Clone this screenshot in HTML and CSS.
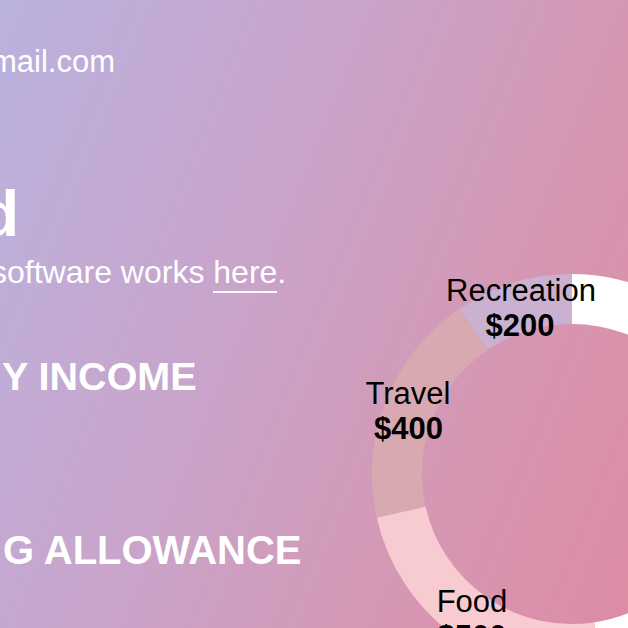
FILE: index.html
```html
<!DOCTYPE html>
<html lang="en">
<head>
<meta charset="utf-8">
<title>Budget</title>
<link rel="stylesheet" href="styles.css">
</head>
<body>
<div class="page">
  <section class="intro">
    <p class="email">mail.com</p>
    <h1 class="title">d</h1>
    <p class="subtitle">software works <a class="link" href="#">here</a>.</p>
    <h2 class="stat stat-income">Y INCOME</h2>
    <h2 class="stat stat-allowance">G ALLOWANCE</h2>
  </section>
  <section class="chart">
    <svg class="donut" width="288" height="378" viewBox="340 250 288 378" xmlns="http://www.w3.org/2000/svg">
      <path class="seg seg-rest" d="M597.9 647.1 A175 175 0 0 0 572 299"/>
      <path class="seg seg-rec" d="M572 299 A175 175 0 0 0 473.6 329.3"/>
      <path class="seg seg-travel" d="M473.6 329.3 A175 175 0 0 0 401.2 512.2"/>
      <path class="seg seg-food" d="M401.2 512.2 A175 175 0 0 0 597.9 647.1"/>
      <text class="lbl" x="521" y="301">Recreation</text>
      <text class="val" x="520" y="336">$200</text>
      <text class="lbl" x="408" y="404">Travel</text>
      <text class="val" x="408.5" y="439">$400</text>
      <text class="lbl" x="472" y="612">Food</text>
      <text class="val" x="472" y="647">$500</text>
    </svg>
  </section>
</div>
</body>
</html>
```

FILE: styles.css
```css
html, body {
  margin: 0;
  padding: 0;
}
body {
  width: 628px;
  height: 628px;
  overflow: hidden;
  background: linear-gradient(112deg, #bab2de 0%, #c9a4ca 40%, #d597b3 72%, #de8ca4 100%);
  font-family: "Liberation Sans", Arial, sans-serif;
  color: #ffffff;
}
.page {
  display: grid;
  grid-template-columns: 340px 288px;
  height: 628px;
}
.intro {
  display: flex;
  flex-direction: column;
  white-space: nowrap;
}
.intro p, .intro h1, .intro h2 {
  margin: 0;
  line-height: 1;
}
.email {
  font-size: 31px;
  margin-top: 46px !important;
  margin-left: -9px !important;
}
.title {
  font-size: 64px;
  font-weight: 700;
  margin-top: 105px !important;
  margin-left: -20px !important;
}
.subtitle {
  font-size: 32px;
  margin-top: 10px !important;
  margin-left: -9px !important;
}
.link {
  color: #ffffff;
  text-decoration: none;
  padding-bottom: 1px;
  border-bottom: 2px solid rgba(255, 255, 255, 0.95);
}
.stat {
  font-size: 39.5px;
  font-weight: 700;
}
.stat-income {
  margin-top: 68.5px !important;
  margin-left: 2px !important;
}
.stat-allowance {
  font-size: 40px;
  margin-top: 134px !important;
  margin-left: 3px !important;
}
.chart {
  display: flex;
  align-items: flex-start;
}
.donut {
  display: block;
  margin-top: 250px;
}
.seg {
  fill: none;
  stroke-width: 50;
}
.seg-rest { stroke: #ffffff; }
.seg-rec { stroke: #cab1d2; }
.seg-travel { stroke: #d8a9b1; }
.seg-food { stroke: #f8cbd0; }
.lbl, .val {
  font-family: "Liberation Sans", Arial, sans-serif;
  font-size: 31px;
  fill: #000000;
  text-anchor: middle;
}
.val {
  font-weight: 700;
}
```
